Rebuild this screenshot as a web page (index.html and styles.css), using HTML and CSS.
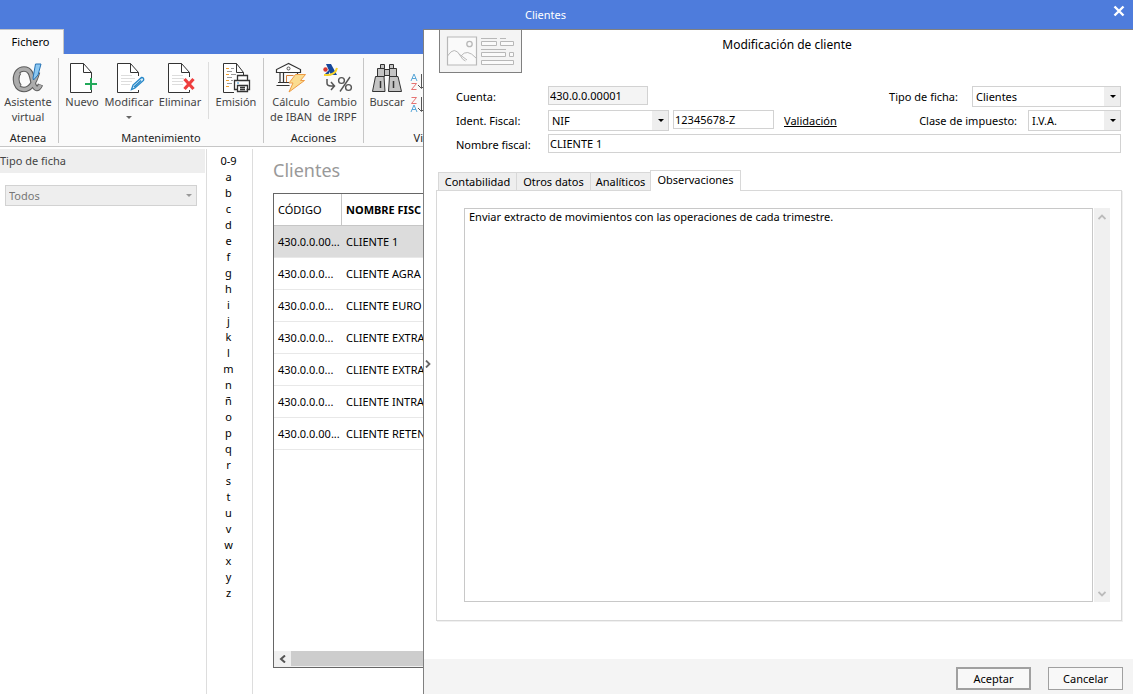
FILE: index.html
```html
<!DOCTYPE html>
<html lang="es">
<head>
<meta charset="utf-8">
<title>Clientes</title>
<link rel="stylesheet" href="styles.css">
</head>
<body>
<header class="titlebar">
  <h1 class="titlebar-text">Clientes</h1>
  <button class="close" type="button" aria-label="Cerrar"><svg width="12" height="12" viewBox="0 0 12 12"><path d="M1.500 1.500l9 9M10.500 1.500l-9 9" stroke="#fff" stroke-width="2.400"/></svg></button>
</header>
<div class="window">
  <main class="app">
    <nav class="tabrow"><button class="ribbon-tab" type="button">Fichero</button></nav>
    <div class="ribbon">
      <section class="group group-atenea">
        <div class="tools">
          <button class="tool" type="button">
            <svg width="32" height="32" viewBox="0 0 32 32" fill="none"><path d="M25.500 10C23 19 19 27.500 12 27.500C6.500 27.500 3.500 23 3.500 17.500C3.500 11 7 7 12 7C18 7 19.500 12 21 20C22 26 25.500 29.500 28.500 22.500" stroke="#5c5c5c" stroke-width="5.600"/><path d="M4.500 17.500c0-4 1-6 2.500-7.500M4.500 17c0 4 1 6 3 8" stroke="#5c5c5c" stroke-width="6"/><path d="M25.500 11C23 19 19 27.500 12 27.500C6.500 27.500 3.500 23 3.500 17.500C3.500 11 7 7 12 7C18 7 19.500 12 21 20C22 26 25.500 29.500 28.500 23" stroke="#acacac" stroke-width="3.400"/><path d="M4.500 17.500c0-4 1-6 2.500-7M4.500 17c0 4 1 6 3 7.500" stroke="#acacac" stroke-width="4"/><path d="M23.500 2h5.500l-3 11-4.500 5-.5-2z" fill="#8cc8f2" stroke="#2673b5"/></svg>
            <span>Asistente<br>virtual</span>
          </button>
        </div>
        <h2 class="group-name">Atenea</h2>
      </section>
      <section class="group group-mant">
        <div class="tools">
          <button class="tool tool-narrow" type="button">
            <svg width="32" height="32" viewBox="0 0 32 32" fill="none"><path d="M25.500 16v-5.500l-8-9H4.500v29h21v-2.500" fill="#fff" stroke="#333"/><path d="M17.500 1.500v9h8" stroke="#333"/><path d="M25 16v12M19 22h12" stroke="#22a95a" stroke-width="2"/></svg>
            <span>Nuevo</span>
          </button>
          <button class="tool tool-wide" type="button">
            <svg width="32" height="32" viewBox="0 0 32 32" fill="none"><path d="M25.500 14v-3.500l-8-9H4.500v29h21v-2.500" fill="#fff" stroke="#333"/><path d="M17.500 1.500v9h8" stroke="#333"/><path d="M8 13.500h11M8 16.500h14M8 19.500h11M8 22.500h9" stroke="#ddd"/><path d="M18.500 27.500l1.500-4.500 8.500-7.500q3 0 2 3l-8.500 7.500zM21 25l7-6.500" fill="#d8ecf8" stroke="#2687c8" stroke-width="1.300"/></svg>
            <span>Modificar</span>
            <i class="caret caret-gray"></i>
          </button>
          <button class="tool tool-mid" type="button">
            <svg width="32" height="32" viewBox="0 0 32 32" fill="none"><path d="M25.500 15v-4.500l-8-9H4.500v29h21v-2.500" fill="#fff" stroke="#333"/><path d="M17.500 1.500v9h8" stroke="#333"/><path d="M8 13.500h11M8 16.500h12M8 19.500h11M8 22.500h11" stroke="#ddd"/><path d="M20.500 17l9 10M29.500 17l-9 10" stroke="#ee3e3e" stroke-width="3.200"/></svg>
            <span>Eliminar</span>
          </button>
          <button class="tool tool-emision" type="button">
            <svg width="32" height="32" viewBox="0 0 32 32" fill="none"><path d="M14 30.500H3.500v-29h13l7 9v2.500M16.500 1.500v9h7" stroke="#333" fill="#fff"/><path d="M6 6.500h3M6 12.500h3M6 18.500h3M6 24.500h3" stroke="#f0a030"/><path d="M11 6.500h3M7 9.500h5M11 12.500h5M7 15.500h5M11 18.500h2M7 21.500h5" stroke="#999"/><path d="M17.500 18v-4.500h10V18M17.500 27.500h-3V18.500h15v9h-3M17.500 23.500h10v6h-10zM20 25.500h5M20 27.500h5" fill="#fff" stroke="#333" stroke-width="1.300"/><path d="M17 21h2" stroke="#2687c8"/></svg>
            <span>Emisión</span>
          </button>
        </div>
        <h2 class="group-name">Mantenimiento</h2>
      </section>
      <section class="group group-acc">
        <div class="tools">
          <button class="tool tool-iban" type="button">
            <svg width="32" height="32" viewBox="0 0 32 32" fill="none"><path d="M13.500 1.500L1.500 7.500v3h24v-3zM5 10.500v10M8.500 10.500v10M22.500 10.500v3M3 20.500h11M1.500 23.500h13" fill="#fff" stroke="#333" stroke-width="1.200"/><circle cx="13.500" cy="6.500" r="1.500" stroke="#555"/><path d="M11.500 20V13.500h7" stroke="#d8823a"/><path d="M20.500 12.500h10l-5 6h4L14 30l4-9h-4z" fill="#fbdc90" stroke="#ee9c45"/></svg>
            <span>Cálculo<br>de IBAN</span>
          </button>
          <button class="tool tool-irpf" type="button">
            <svg width="32" height="32" viewBox="0 0 32 32" fill="none"><path d="M5 2h5l6 11h-6z" fill="#15479b"/><path d="M3 13l7-7-3 8z" fill="#15479b"/><circle cx="4.500" cy="7.500" r="2.200" fill="#d83830"/><path d="M3 13q11 1 13-7" stroke="#f9d52b" stroke-width="2"/><path d="M6 17v4q0 3 4 3h3M10 20l3.500 4-3.500 4" stroke="#555" stroke-width="1.500"/><circle cx="20.500" cy="18.500" r="2.900" stroke="#555" stroke-width="1.400"/><circle cx="27.500" cy="25.500" r="2.900" stroke="#555" stroke-width="1.400"/><path d="M29 15L19 29.500" stroke="#555" stroke-width="1.400"/></svg>
            <span>Cambio<br>de IRPF</span>
          </button>
        </div>
        <h2 class="group-name">Acciones</h2>
      </section>
      <section class="group group-vista">
        <div class="tools">
          <button class="tool tool-narrow" type="button">
            <svg width="32" height="32" viewBox="0 0 32 32" fill="#c4c4c4" stroke="#333"><path d="M9.500 2.500h4v4h-4zM18.500 2.500h4v4h-4zM13.500 7.500h5v6h-5zM6.500 6.500h7v8h-7zM18.500 6.500h7v8h-7zM4.500 14.500h8.500l1 15H1.500zM18.500 14.500h8.500l3.500 15H17.500z"/><path d="M9.500 19v7M22.500 19v7" stroke-width="1.500"/></svg>
            <span>Buscar</span>
          </button>
          <div class="sorts">
            <button class="sort" type="button" aria-label="Orden ascendente"><svg width="13" height="18" viewBox="0 0 13 18" fill="none"><path d="M1 8l3-7 3 7M2 5.500h4" stroke="#58a6d8"/><path d="M1.500 10.500h5L1.500 16.500h5" stroke="#e57373"/><path d="M11.500 1v14M8 12l3.500 3.500L15 12" stroke="#555"/></svg></button>
            <button class="sort" type="button" aria-label="Orden descendente"><svg width="13" height="18" viewBox="0 0 13 18" fill="none"><path d="M1.500 1.500h5L1.500 7.500h5" stroke="#e57373"/><path d="M1 16l3-7 3 7M2 13.500h4" stroke="#58a6d8"/><path d="M11.500 1v14M8 12l3.500 3.500L15 12" stroke="#555"/></svg></button>
          </div>
        </div>
        <h2 class="group-name">Vi</h2>
      </section>
    </div>
    <div class="workspace">
      <aside class="filter">
        <label class="filter-title" for="filtro">Tipo de ficha</label>
        <div class="pick pick-filter"><select id="filtro" disabled><option>Todos</option></select><i class="caret caret-light"></i></div>
      </aside>
      <nav class="letters">
        <a href="#">0-9</a><a href="#">a</a><a href="#">b</a><a href="#">c</a><a href="#">d</a><a href="#">e</a><a href="#">f</a><a href="#">g</a><a href="#">h</a><a href="#">i</a><a href="#">j</a><a href="#">k</a><a href="#">l</a><a href="#">m</a><a href="#">n</a><a href="#">ñ</a><a href="#">o</a><a href="#">p</a><a href="#">q</a><a href="#">r</a><a href="#">s</a><a href="#">t</a><a href="#">u</a><a href="#">v</a><a href="#">w</a><a href="#">x</a><a href="#">y</a><a href="#">z</a>
      </nav>
      <section class="list">
        <h2 class="list-title">Clientes</h2>
        <div class="grid">
          <table class="clients">
            <thead><tr><th class="code">CÓDIGO</th><th class="name">NOMBRE FISC</th></tr></thead>
            <tbody>
              <tr class="selected"><td>430.0.0.00...</td><td>CLIENTE 1</td></tr>
              <tr><td>430.0.0.0...</td><td>CLIENTE AGRA</td></tr>
              <tr><td>430.0.0.0...</td><td>CLIENTE EURO</td></tr>
              <tr><td>430.0.0.0...</td><td>CLIENTE EXTRA</td></tr>
              <tr><td>430.0.0.0...</td><td>CLIENTE EXTRA</td></tr>
              <tr><td>430.0.0.0...</td><td>CLIENTE INTRA</td></tr>
              <tr><td>430.0.0.00...</td><td>CLIENTE RETEN</td></tr>
            </tbody>
          </table>
          <div class="hscroll"><button class="hscroll-btn" type="button" aria-label="Izquierda"><svg width="8" height="8" viewBox="0 0 8 8" fill="none"><path d="M6 0.500L2 4l4 3.500" stroke="#555" stroke-width="2"/></svg></button><div class="hscroll-thumb"></div></div>
        </div>
      </section>
    </div>
  </main>
  <section class="dialog">
    <button class="expand" type="button" aria-label="Expandir"><svg width="6" height="8" viewBox="0 0 6 8" fill="none"><path d="M1 0.500L4.500 4 1 7.500" stroke="#666" stroke-width="1.800"/></svg></button>
    <header class="dialog-head">
      <div class="card-logo"><svg width="70" height="30" viewBox="0 0 70 30" fill="none" stroke="#b8b8b8"><path d="M1.500 1h29v28h-29z" fill="#fafafa" stroke-width="1.200"/><circle cx="23.500" cy="8" r="2.700" stroke-width="1.300"/><path d="M1.500 20q7-11 13 0 2 4 5 5M15 20q6-8 15 2M13 18l8 6"/><path d="M35 2.500h16M54 2.500h6M35.500 5.500h15v4h-15zM54.500 5.500h13v4h-13zM35 13.500h25M35.500 16.500h24v4h-24zM63.500 16.500h4v4h-4zM35.500 24.500h32v4h-32z" fill="#fafafa"/></svg></div>
      <h2 class="dialog-title">Modificación de cliente</h2>
    </header>
    <form class="form">
      <div class="row">
        <label class="lab" for="cuenta">Cuenta:</label>
        <input class="box box-short box-ro" id="cuenta" value="430.0.0.00001" readonly>
        <label class="lab-right" for="tipo">Tipo de ficha:</label>
        <div class="pick pick-tipo"><select id="tipo"><option>Clientes</option></select><i class="caret"></i></div>
      </div>
      <div class="row">
        <label class="lab" for="ident">Ident. Fiscal:</label>
        <div class="pick pick-ident"><select id="ident"><option>NIF</option></select><i class="caret"></i></div>
        <input class="box box-short" aria-label="Número fiscal" value="12345678-Z">
        <a class="valid" href="#">Validación</a>
        <label class="lab-right lab-clase" for="clase">Clase de impuesto:</label>
        <div class="pick pick-clase"><select id="clase"><option>I.V.A.</option></select><i class="caret"></i></div>
      </div>
      <div class="row">
        <label class="lab" for="nombre">Nombre fiscal:</label>
        <input class="box box-full" id="nombre" value="CLIENTE 1">
      </div>
    </form>
    <div class="tabs" role="tablist">
      <button class="tab tab-first" type="button" role="tab">Contabilidad</button><button class="tab tab-otros" type="button" role="tab">Otros datos</button><button class="tab tab-anal" type="button" role="tab">Analíticos</button><button class="tab tab-active" type="button" role="tab" aria-selected="true">Observaciones</button>
    </div>
    <div class="panel">
      <textarea class="notes" aria-label="Observaciones">Enviar extracto de movimientos con las operaciones de cada trimestre.</textarea>
      <div class="vscroll">
        <button class="vscroll-btn" type="button" aria-label="Subir"><svg width="8" height="6" viewBox="0 0 8 6" fill="none"><path d="M0.500 5L4 1.500 7.500 5" stroke="#bbb" stroke-width="1.800"/></svg></button>
        <button class="vscroll-btn" type="button" aria-label="Bajar"><svg width="8" height="6" viewBox="0 0 8 6" fill="none"><path d="M0.500 1L4 4.500 7.500 1" stroke="#bbb" stroke-width="1.800"/></svg></button>
      </div>
    </div>
    <footer class="actions">
      <button class="btn btn-main" type="button">Aceptar</button>
      <button class="btn" type="button">Cancelar</button>
    </footer>
  </section>
</div>
</body>
</html>
```
FILE: styles.css
```css
* { box-sizing: border-box; }
body {
  margin: 0;
  height: 100vh;
  display: flex;
  flex-direction: column;
  font: 11px/16px "Noto Sans", "Open Sans", sans-serif;
  color: #000;
  background: #fff;
  overflow: hidden;
}
h1, h2 { margin: 0; font-size: inherit; font-weight: 400; }
button, input, select, textarea { font: inherit; color: inherit; border-radius: 0; margin: 0; }
button { padding: 0; border: 0; background: none; }
svg { display: block; }
i { display: block; }

.titlebar { flex: none; display: flex; height: 29px; background: #4e7cdc; color: #fff; }
.titlebar-text { flex: 1; padding-right: 14px; text-align: center; line-height: 30px; }
.close { width: 28px; height: 22px; display: flex; align-items: center; justify-content: center; }

.window { flex: 1; display: flex; min-height: 0; }
.app { flex: none; width: 423px; display: flex; flex-direction: column; overflow: hidden; }
.tabrow { flex: none; display: flex; height: 25px; background: #4e7cdc; }
.ribbon-tab { width: 64px; padding-right: 2px; background: #fafafa; border-top: 1px solid #c6c6c6; border-right: 1px solid #c6c6c6; }

.ribbon { flex: none; display: flex; height: 93px; padding-top: 4px; background: #fafafa; border-bottom: 1px solid #c6c6c6; color: #444; }
.group { flex: none; display: flex; flex-direction: column; justify-content: space-between; height: 85px; border-right: 1px solid #c6c6c6; }
.group-atenea { width: 59px; padding-right: 2px; }
.group-mant { width: 205px; }
.group-acc { width: 100px; }
.group-vista { flex: 1; border-right: 0; }
.group-vista .group-name { text-align: right; }
.group-name { text-align: center; line-height: 10px; color: #222; }
.tools { display: flex; padding-top: 4px; }
.tool { flex: none; width: 56px; display: flex; flex-direction: column; align-items: center; line-height: 15px; white-space: nowrap; }
.tool-narrow { width: 46px; }
.tool-wide { width: 48px; }
.tool-mid { width: 54px; margin-right: 1px; }
.tool-emision { width: 55px; border-left: 1px solid #ddd; }
.tool-iban { width: 54px; }
.tool-irpf { width: 38px; }

.caret { width: 0; border: 3px solid transparent; border-top-color: #000; border-bottom: 0; }
.caret-gray { margin-top: 7px; border-top-color: #666; }
.caret-light { border-top-color: #999; }
.sorts { display: flex; flex-direction: column; gap: 5px; padding-top: 11px; }

.workspace { flex: 1; display: flex; min-height: 0; padding-top: 2px; }
.filter { flex: none; width: 207px; border-right: 1px solid #ddd; }
.filter-title { display: block; width: 205px; line-height: 24px; background: #eee; color: #444; }
.letters { flex: none; width: 46px; display: flex; flex-direction: column; padding: 4px 2px 0 0; border-right: 1px solid #ddd; text-align: center; }
.letters a { color: #000; text-decoration: none; }
.list { flex: 1; min-width: 0; display: flex; flex-direction: column; padding: 8px 0 26px 20px; }
.list-title { font-size: 18px; line-height: 26px; padding-bottom: 10px; color: #999; }
.grid { flex: 1; display: flex; flex-direction: column; justify-content: space-between; border: 1px solid #666; border-right: 0; overflow: hidden; }
.clients { width: 100%; table-layout: fixed; border-collapse: separate; border-spacing: 0; white-space: nowrap; }
.clients th, .clients td { height: 32px; padding: 0 0 0 4px; text-align: left; border-bottom: 1px solid #e8e8e8; }
.clients th { border-bottom-color: #c6c6c6; }
.clients .code { width: 68px; font-weight: 400; border-right: 1px solid #c6c6c6; }
.clients .name { font-weight: 700; }
.selected td { background: #dcdcdc; }
.hscroll { flex: none; display: flex; height: 16px; background: #f0f0f0; }
.hscroll-btn { width: 17px; display: flex; align-items: center; justify-content: center; }
.hscroll-thumb { flex: 1; margin-bottom: 1px; background: #cdcdcd; }

.pick { position: relative; flex: none; height: 21px; }
.pick select { appearance: none; width: 100%; height: 100%; padding: 0 20px 0 3px; border: 1px solid #d2d2d2; background: linear-gradient(#eee, #eee) right / 16px 100% no-repeat #fff; }
.pick .caret { position: absolute; right: 5px; top: 9px; pointer-events: none; }
.pick-filter { width: 192px; margin: 12px 0 0 5px; }
.pick-filter select { background: #eee; color: #777; opacity: 1; }
.pick-tipo { width: 149px; }
.pick-ident { width: 121px; }
.pick-clase { width: 93px; }

.dialog { position: relative; flex: 1; min-width: 0; display: flex; flex-direction: column; border-left: 1px solid #808080; border-top: 1px solid #808080; background: #fff; }
.expand { position: absolute; left: 1px; top: 326px; width: 8px; height: 16px; display: flex; align-items: center; }
.dialog-head { flex: none; display: flex; padding-left: 15px; }
.card-logo { width: 83px; height: 43px; padding: 6px 6px; border: 1px solid #808080; border-top: 0; background: #f4f4f4; }
.dialog-title { flex: 1; padding: 7px 81px 0 0; text-align: center; font-size: 12px; }
.form { flex: none; display: flex; flex-direction: column; gap: 3px; padding: 13px 12px 0 32px; }
.row { display: flex; height: 21px; }
.lab { flex: none; width: 92px; line-height: 22px; }
.lab-right { margin-left: auto; padding-right: 14px; line-height: 22px; }
.lab-clase { padding-right: 11px; }
.box { height: 19px; min-width: 0; padding: 0 1px 1px; border: 1px solid #d2d2d2; }
.box-short { width: 100px; }
.box-ro { background: #f4f4f4; }
.box-full { flex: 1; }
.pick-ident + .box-short { width: 101px; margin-left: 4px; }
.valid { padding-left: 10px; line-height: 22px; color: #000; }

.tabs { flex: none; display: flex; align-items: flex-end; margin: 15px 0 0 14px; }
.tab { height: 18px; border: 1px solid #d8d8d8; border-width: 1px 1px 0 0; background: #eee; }
.tab-first { width: 79px; border-left-width: 1px; }
.tab-otros { width: 74px; }
.tab-anal { width: 59px; border-right: 0; }
.tab-active { width: 91px; height: 21px; margin-bottom: -1px; padding-bottom: 2px; border-left-width: 1px; background: #fff; z-index: 1; }
.panel { flex: 1; min-height: 0; display: flex; margin: 0 11px 38px 12px; padding: 17px 11px 18px 27px; border: 1px solid #d8d8d8; box-shadow: 1px 1px 0 0 #f0f0f0; }
.notes { flex: 1; min-width: 0; padding: 0 4px; border: 1px solid #c8c8c8; resize: none; overflow: hidden; }
.vscroll { display: flex; flex-direction: column; justify-content: space-between; width: 16px; margin-left: 1px; background: #f0f0f0; }
.vscroll-btn { height: 17px; display: flex; align-items: center; justify-content: center; }
.actions { flex: none; display: flex; justify-content: flex-end; align-items: center; gap: 17px; height: 35px; padding: 4px 10px 0 0; background: #f4f4f4; }
.btn { width: 75px; height: 23px; border: 1px solid #a0a0a0; background: #f8f8f8; }
.btn-main { border-width: 2px; }
```
